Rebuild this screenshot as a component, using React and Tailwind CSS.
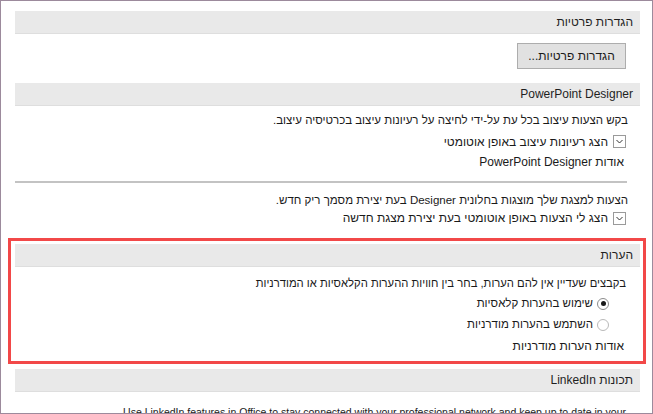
function SectionHeader({ children }) {
  return (
    <div className="h-[23px] bg-[#e9e9e9] border-b border-[#dedede] flex items-center pr-[7px] text-[12px] text-[#1f1f1f]">
      {children}
    </div>
  )
}

function Checkbox() {
  return (
    <span className="w-[13px] h-[13px] border border-[#9a9a9a] bg-white flex items-center justify-center flex-shrink-0">
      <svg width="9" height="9" viewBox="0 0 9 9" fill="none">
        <path d="M1.5 3l3 3 3-3" stroke="#333" strokeWidth="1" />
      </svg>
    </span>
  )
}

function Radio({ checked }) {
  return (
    <span
      className={
        checked
          ? 'w-[12px] h-[12px] rounded-full border border-[#8c8c8c] bg-white flex items-center justify-center flex-shrink-0'
          : 'w-[12px] h-[12px] rounded-full border border-[#b9b9b9] bg-white flex-shrink-0'
      }
    >
      {checked && <span className="w-[5px] h-[5px] rounded-full bg-[#1a1a1a]" />}
    </span>
  )
}

export default function App() {
  return (
    <div
      dir="rtl"
      className="w-[653px] h-[414px] overflow-hidden bg-white border border-[#9c8a9c] text-[12px] text-[#1a1a1a] leading-none"
      style={{ fontFamily: '"Liberation Sans", "DejaVu Sans", sans-serif' }}
    >
      <div className="pt-[10px] pl-[14px] pr-[12px]">

        {/* הגדרות פרטיות */}
        <SectionHeader>הגדרות פרטיות</SectionHeader>
        <div className="mt-[9px] pr-[14px] flex">
          <button className="w-[109px] h-[26px] bg-[#e1e1e1] border border-[#adadad] text-[12px] text-[#1a1a1a] flex items-center justify-center">
            הגדרות פרטיות...
          </button>
        </div>

        {/* PowerPoint Designer */}
        <div className="mt-[14px]">
          <SectionHeader>PowerPoint Designer</SectionHeader>
        </div>
        <div className="mt-[5px] h-[20px] flex items-center pr-[12px] text-[11.5px]">
          בקש הצעות עיצוב בכל עת על-ידי לחיצה על רעיונות עיצוב בכרטיסיה עיצוב.
        </div>
        <div className="h-[21px] flex items-center gap-[5px] pr-[14px]">
          <Checkbox />
          <span>הצג רעיונות עיצוב באופן אוטומטי</span>
        </div>
        <div className="h-[20px] flex items-center pr-[16px]">אודות PowerPoint Designer</div>
        <div className="mt-[9px] mr-[13px] h-[2px] bg-[#c3c3c3]" />
        <div className="mt-[9px] h-[18px] flex items-center pr-[12px] text-[11.5px]">
          הצעות למצגת שלך מוצגות בחלונית Designer בעת יצירת מסמך ריק חדש.
        </div>
        <div className="h-[16px] flex items-center gap-[5px] pr-[14px]">
          <Checkbox />
          <span>הצג לי הצעות באופן אוטומטי בעת יצירת מצגת חדשה</span>
        </div>

        {/* הערות */}
        <div className="mt-[12px] -ml-[7px] -mr-[6px] border-[3px] border-[#f24848] pl-[4px] pr-[3px] pt-[3px] pb-[4px]">
          <SectionHeader>הערות</SectionHeader>
          <div className="mt-[8px] h-[18px] flex items-center pr-[14px] text-[11.25px]">
            בקבצים שעדיין אין להם הערות, בחר בין חוויות ההערות הקלאסיות או המודרניות
          </div>
          <div className="h-[21px] flex items-center gap-[4px] pr-[31px] text-[11.5px]">
            <Radio checked />
            <span>שימוש בהערות קלאסיות</span>
          </div>
          <div className="h-[21px] flex items-center gap-[4px] pr-[31px] text-[11.5px]">
            <Radio />
            <span>השתמש בהערות מודרניות</span>
          </div>
          <div className="h-[22px] flex items-center pr-[16px]">אודות הערות מודרניות</div>
        </div>

        {/* LinkedIn */}
        <div className="mt-[5px]">
          <SectionHeader>תכונות LinkedIn</SectionHeader>
        </div>
        <div className="mt-[12px] h-[16px] flex items-center pr-[14px] whitespace-nowrap text-[10.5px]">
          <span dir="ltr">Use LinkedIn features in Office to stay connected with your professional network and keep up to date in your</span>
        </div>
      </div>
    </div>
  )
}
